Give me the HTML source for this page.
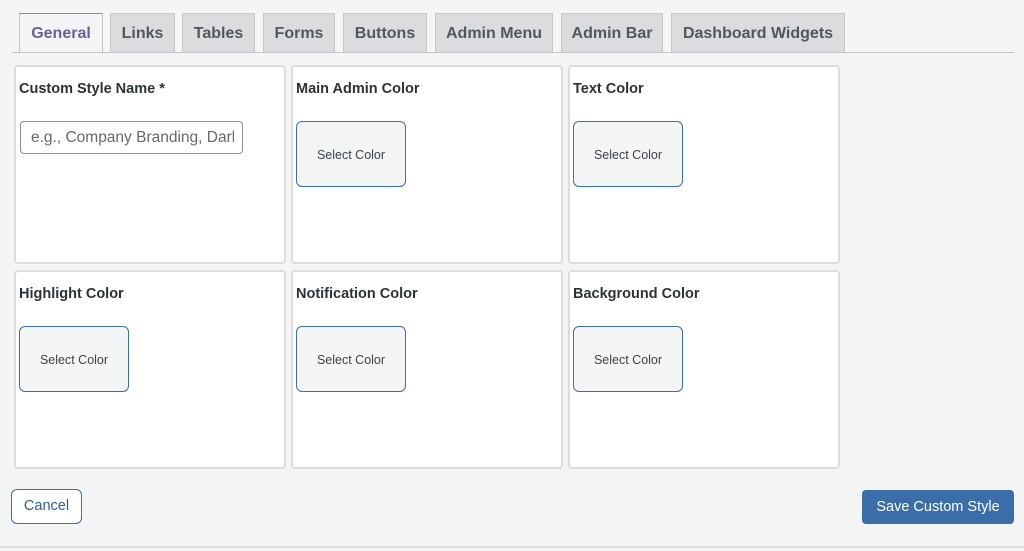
<!DOCTYPE html>
<html><head><style>
body{margin:0;width:1024px;height:551px;background:#f3f5f5;font-family:"Liberation Sans",sans-serif;position:relative;overflow:hidden}
.tab{position:absolute;top:13px;height:39px;background:#dcdcde;border:1px solid #c9c9cc;border-bottom:none;box-sizing:border-box;font-size:16px;font-weight:bold;color:#50575e;text-align:center;line-height:39px}
.tab.on{background:#f3f5f5;color:#6b5fa3;border-color:#c3c4c7;height:41px;border-top:1px solid #8a84b8}
.line{position:absolute;left:12px;top:52px;width:1002px;height:1px;background:#c3c4c7}
.card{position:absolute;width:272px;height:199px;background:#fff;border:2px solid #dcdcde;border-radius:4px;box-sizing:border-box}
.lbl{position:absolute;left:3px;top:14px;font-size:14.5px;font-weight:bold;color:#2c3338}
.sel{position:absolute;left:3px;top:54px;width:110px;height:66px;box-sizing:border-box;border:1px solid #3a6fb0;border-radius:6px;background:#f4f5f5;font-size:12.5px;color:#3c434a;text-align:center;line-height:66px}
.inp{position:absolute;left:4px;top:54px;width:223px;height:33px;box-sizing:border-box;border:1px solid #8c8f94;border-radius:4px;font-size:15.5px;color:#646970;line-height:31px;padding-left:10px;white-space:nowrap;overflow:hidden}
.btn{position:absolute;box-sizing:border-box;border-radius:4px;font-size:14.5px;text-align:center}
.bot{position:absolute;left:0;top:546px;width:1024px;height:2px;background:#dcdcde}
</style></head><body>
<div class="tab on" style="left:19px;width:84px">General</div>
<div class="tab" style="left:110px;width:65px">Links</div>
<div class="tab" style="left:182px;width:73px">Tables</div>
<div class="tab" style="left:263px;width:72px">Forms</div>
<div class="tab" style="left:343px;width:84px">Buttons</div>
<div class="tab" style="left:435px;width:118px">Admin Menu</div>
<div class="tab" style="left:561px;width:102px">Admin Bar</div>
<div class="tab" style="left:671px;width:174px">Dashboard Widgets</div>
<div class="line"></div>

<div class="card" style="left:14px;top:65px"><div class="lbl">Custom Style Name *</div><div class="inp"><span style="display:inline-block;width:203px;overflow:hidden">e.g., Company Branding, Dark</span></div></div>
<div class="card" style="left:291px;top:65px"><div class="lbl">Main Admin Color</div><div class="sel">Select Color</div></div>
<div class="card" style="left:568px;top:65px"><div class="lbl">Text Color</div><div class="sel">Select Color</div></div>
<div class="card" style="left:14px;top:270px"><div class="lbl">Highlight Color</div><div class="sel">Select Color</div></div>
<div class="card" style="left:291px;top:270px"><div class="lbl">Notification Color</div><div class="sel">Select Color</div></div>
<div class="card" style="left:568px;top:270px"><div class="lbl">Background Color</div><div class="sel">Select Color</div></div>

<div class="btn" style="left:11px;top:489px;width:71px;height:35px;border:1px solid #3a6fb0;background:#fff;color:#2c5f9e;line-height:33px;border-radius:6px">Cancel</div>
<div class="btn" style="left:862px;top:490px;width:152px;height:34px;background:#3a6ea8;color:#fff;line-height:34px">Save Custom Style</div>
<div class="bot"></div>
</body></html>
